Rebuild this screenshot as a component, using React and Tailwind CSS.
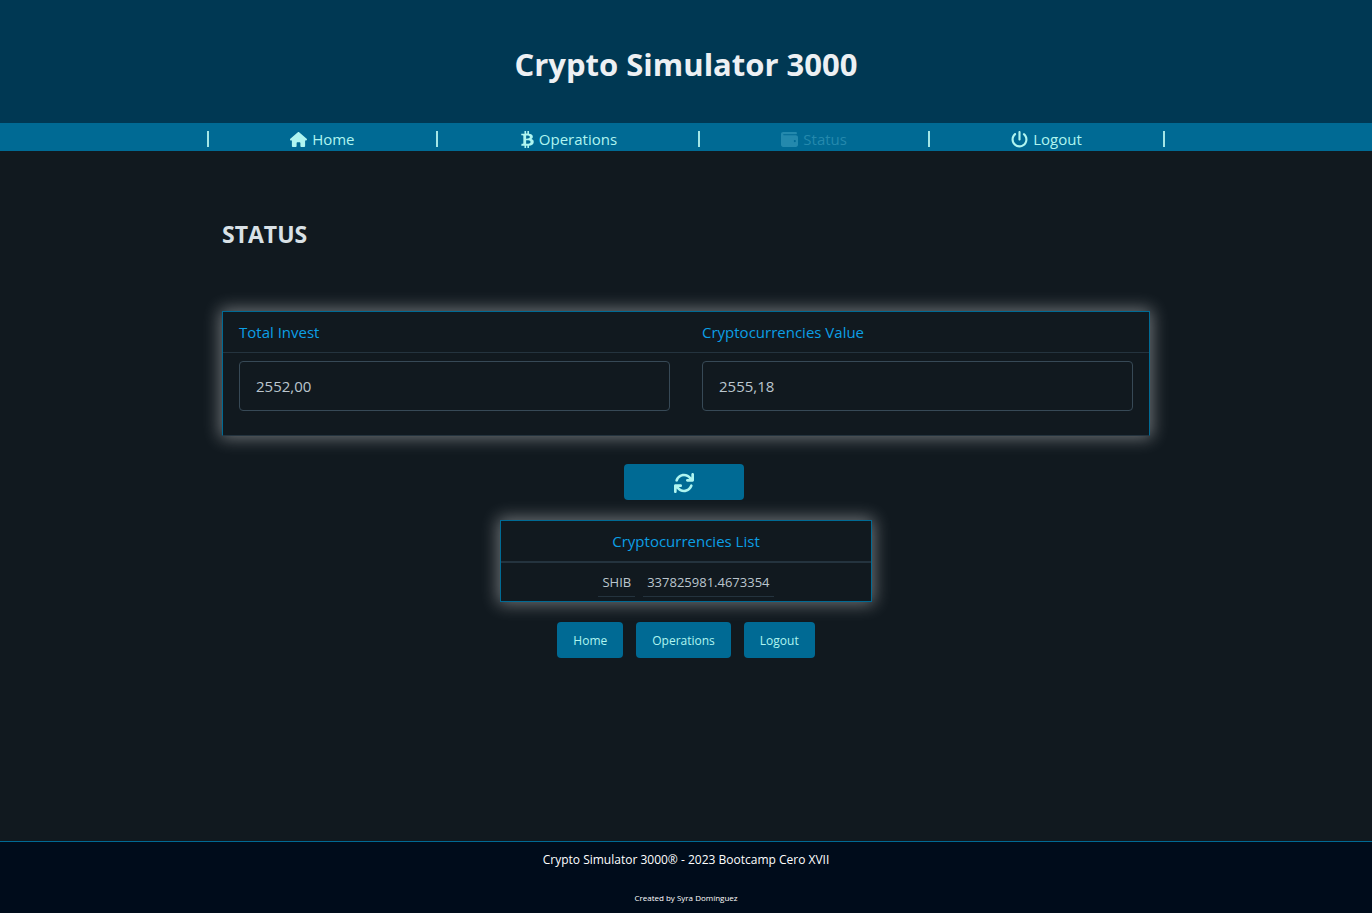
import { FaHouse, FaBtc, FaWallet, FaPowerOff } from "react-icons/fa6";

const links = [
  { label: "Home", Icon: FaHouse },
  { label: "Operations", Icon: FaBtc, tight: true },
  { label: "Status", Icon: FaWallet, disabled: true },
  { label: "Logout", Icon: FaPowerOff },
];

const holdings = [{ coin: "SHIB", amount: "337825981.4673354" }];

const glow = "shadow-[0_0_16px_2px_rgba(255,255,255,0.4)]";

function RefreshIcon({ className }) {
  return (
    <svg viewBox="16 16 480 480" fill="currentColor" aria-hidden="true" className={className}>
      <path d="M464 16c-17.67 0-32 14.31-32 32v74.09C392.1 66.52 327.4 32 256 32C161.5 32 78.59 92.34 49.58 182.2c-5.438 16.81 3.797 34.88 20.61 40.28c16.89 5.5 34.88-3.812 40.3-20.59C130.9 138.5 189.4 96 256 96c50.5 0 96.26 24.55 124.4 64H336c-17.67 0-32 14.31-32 32s14.33 32 32 32h128c17.67 0 32-14.31 32-32V48C496 30.31 481.7 16 464 16zM441.8 289.6c-16.92-5.438-34.88 3.812-40.3 20.59C381.1 373.5 322.6 416 256 416c-50.5 0-96.25-24.55-124.4-64H176c17.67 0 32-14.31 32-32s-14.33-32-32-32h-128c-17.67 0-32 14.31-32 32v144c0 17.69 14.33 32 32 32s32-14.31 32-32v-74.09C119.9 445.5 184.6 480 255.1 480c94.45 0 177.4-60.34 206.4-150.2C467.9 313 458.6 294.1 441.8 289.6z" />
    </svg>
  );
}

function Separator() {
  return <li aria-hidden="true" className="h-4 w-0.5 bg-[#a4e6e6]" />;
}

function NavItem({ label, Icon, disabled, tight }) {
  return (
    <li>
      <a
        href="#"
        aria-disabled={disabled}
        className={`flex items-center text-[15px] leading-6 ${tight ? "gap-[3px]" : "gap-[5px]"} ${
          disabled ? "pointer-events-none text-[#2489ad]" : "text-[#aff5f0]"
        }`}
      >
        <Icon className="h-[17px] w-auto" />
        {label}
      </a>
    </li>
  );
}

function Field({ id, label, value }) {
  return (
    <div className="flex flex-1 flex-col">
      <label htmlFor={id} className="border-b border-[#24333e] px-4 py-2 text-[15px] leading-6 text-[#0c9fe5]">
        {label}
      </label>
      <div className="px-4 pt-2 pb-6">
        <input
          id={id}
          readOnly
          defaultValue={value}
          className="block h-[50px] w-full rounded border border-[#374956] bg-transparent px-4 text-[15px] text-[#bbc6ce] outline-none"
        />
      </div>
    </div>
  );
}

export default function App() {
  return (
    <div className="flex min-h-screen flex-col bg-[#11191f] font-['Open_Sans','Noto_Sans',sans-serif]">
      <header className="bg-[#003853] pt-[43px] pb-[37px] text-center">
        <h1 className="text-[31px] leading-[43px] font-bold text-[#edf0f3]">Crypto Simulator 3000</h1>
      </header>
      <nav className="bg-[#006a94]">
        <ul className="mx-auto flex h-7 max-w-[960px] items-center justify-between px-px pt-1">
          <Separator />
          {links.map((link) => [
            <NavItem key={link.label} {...link} />,
            <Separator key={`${link.label}-end`} />,
          ])}
        </ul>
      </nav>
      <main className="mx-auto flex w-full max-w-[960px] flex-1 flex-col items-center px-4 pt-[65px]">
        <h2 className="mb-[59px] w-full text-[23px] leading-9 font-bold text-[#d9e1e6]">STATUS</h2>
        <section className={`flex w-full border border-[#006a94] border-b-[#24333e] bg-[#11191f] ${glow}`}>
          <Field id="invest" label="Total Invest" value="2552,00" />
          <Field id="value" label="Cryptocurrencies Value" value="2555,18" />
        </section>
        <button
          type="button"
          aria-label="Refresh"
          className="mt-7 mr-1 flex h-9 w-[120px] items-center justify-center rounded bg-[#006a94] pt-0.5 text-[#aff5f0]"
        >
          <RefreshIcon className="size-5" />
        </button>
        <section className={`mt-5 w-[372px] max-w-full border border-[#006a94] bg-[#11191f] text-center ${glow}`}>
          <h3 className="border-b-2 border-[#24333e] py-2 text-[15px] leading-6 text-[#0c9fe5]">Cryptocurrencies List</h3>
          <table className="mx-auto mb-1 border-separate border-spacing-x-2 border-spacing-y-0 text-[13px] leading-5 text-[#bbc6ce]">
            <tbody>
              {holdings.map(({ coin, amount }) => (
                <tr key={coin}>
                  <td className="border-b border-[#24333e] px-1 pt-[9px] pb-1">{coin}</td>
                  <td className="border-b border-[#24333e] px-1 pt-[9px] pb-1">{amount}</td>
                </tr>
              ))}
            </tbody>
          </table>
        </section>
        <div className="mt-5 flex gap-[13px]">
          {["Home", "Operations", "Logout"].map((label) => (
            <button
              key={label}
              type="button"
              className="h-9 rounded bg-[#006a94] px-4 pt-0.5 text-[12px] leading-5 text-[#aff5f0]"
            >
              {label}
            </button>
          ))}
        </div>
      </main>
      <footer className="flex h-[72px] flex-col items-center border-t border-[#006a94] bg-[#000c1b] pt-2 text-white">
        <p className="text-[12px] leading-5">Crypto Simulator 3000® - 2023 Bootcamp Cero XVII</p>
        <p className="mt-5 text-[8px] leading-4">Created by Syra Domínguez</p>
      </footer>
    </div>
  );
}
